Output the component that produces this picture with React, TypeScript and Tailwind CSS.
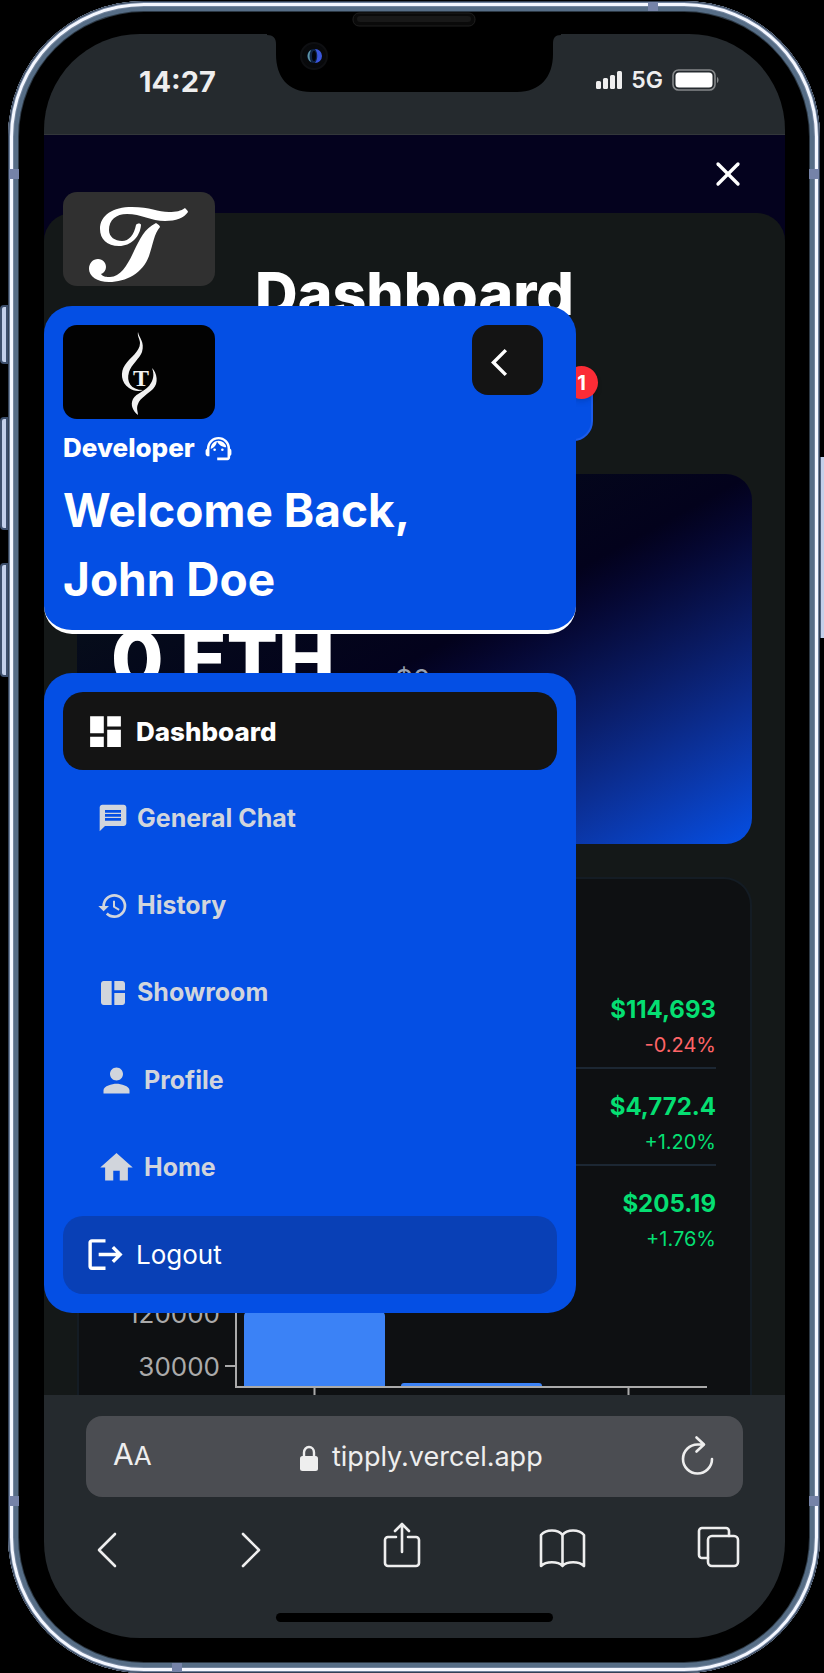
import type { ReactNode } from "react";
import {
  MdArrowBackIos,
  MdDashboard,
  MdHistory,
  MdHome,
  MdLogout,
  MdMessage,
  MdPerson,
  MdSpaceDashboard,
  MdSupportAgent,
} from "react-icons/md";
import { X } from "lucide-react";

const prices = [
  { coin: "Bitcoin", price: "$114,693", change: "-0.24%", up: false },
  { coin: "Ethereum", price: "$4,772.4", change: "+1.20%", up: true },
  { coin: "Solana", price: "$205.19", change: "+1.76%", up: true },
];

const links = [
  { label: "General Chat", icon: <MdMessage size={32} /> },
  { label: "History", icon: <MdHistory size={32} /> },
  { label: "Showroom", icon: <MdSpaceDashboard size={32} /> },
  { label: "Profile", icon: <MdPerson size={39} /> },
  { label: "Home", icon: <MdHome size={39} /> },
];

function Notch() {
  return (
    <svg
      className="absolute left-1/2 top-2.5 -translate-x-1/2"
      width="298"
      height="84"
      viewBox="0 0 298 84"
      aria-hidden="true"
    >
      <rect x="88" y="2" width="122" height="13" rx="6" fill="#0a0a0a" stroke="#1e1e1e" />
      <rect x="92" y="5" width="114" height="6" rx="3" fill="#181818" />
      <path
        d="M2 23H296V24C290 24 288 27 288 33V43C288 66 275 81 252 81H46C23 81 11 66 11 43V33C11 27 8 24 2 24Z"
        fill="#000"
      />
      <circle cx="49" cy="45" r="13" fill="#08090b" stroke="#0e0f12" strokeWidth="2" />
      <circle cx="49" cy="45" r="7" fill="#0f2344" />
      <path d="M46 39a7 7 0 0 0 0 12c-2-4-2-8 0-12Z" fill="#5f97a8" />
      <path d="M50 38a7 7 0 0 1 0 14c3-4 3-10 0-14Z" fill="#3a56dd" />
      <ellipse cx="49" cy="45" rx="2" ry="5" fill="#02030a" />
    </svg>
  );
}

function StatusBar() {
  return (
    <header className="flex h-[101px] items-start justify-between border-b border-[#33373a] bg-[#252a2e] pl-[95px] pr-[66px] pt-[30px] text-[#eeeeee]">
      <time className="text-[29px] font-bold leading-9">14:27</time>
      <div className="flex h-8 items-center gap-[9px]">
        <svg width="26" height="18" viewBox="0 0 26 18" fill="currentColor" aria-hidden="true">
          <rect x="0" y="10" width="5" height="8" rx="1.5" />
          <rect x="7" y="7" width="5" height="11" rx="1.5" />
          <rect x="14" y="4" width="5" height="14" rx="1.5" />
          <rect x="21" y="0" width="5" height="18" rx="1.5" />
        </svg>
        <span className="text-[23px] font-semibold leading-8">5G</span>
        <svg width="47" height="22" viewBox="0 0 47 22" aria-hidden="true">
          <rect x="1" y="1" width="42" height="20" rx="5.5" fill="none" stroke="#85888a" strokeWidth="1.6" />
          <rect x="3.5" y="3.5" width="37" height="15" rx="3.5" fill="#fff" />
          <path d="M45 8c2 1 2 5 0 6Z" fill="#85888a" />
        </svg>
      </div>
    </header>
  );
}

function Chart() {
  return (
    <svg className="mt-3.5 block w-full" viewBox="0 0 603 120" role="img" aria-label="Price chart">
      <g fill="#aaaaaa" fontSize="26" textAnchor="end">
        <text x="107" y="48">120000</text>
        <text x="107" y="101">30000</text>
      </g>
      <path d="M131 112V41a5 5 0 0 1 5-5H267a5 5 0 0 1 5 5V112Z" fill="#3b82f6" />
      <path d="M288 112v-1a3 3 0 0 1 3-3H426a3 3 0 0 1 3 3v1Z" fill="#3b82f6" />
      <path d="M123 0V112H594M112 91H123M201.500 112V120M515.500 112V120" fill="none" stroke="#aaaaaa" strokeWidth="2" />
    </svg>
  );
}

function Dashboard() {
  return (
    <div className="bg-[#04021e]">
      <div className="flex h-[78px] items-center justify-end pr-[37px]">
        <button type="button" aria-label="Close" className="text-white">
          <X size={40} strokeWidth={2} />
        </button>
      </div>
      <main className="rounded-t-[28px] bg-[#141818] px-[33px] pt-[45px]">
        <h1 className="text-center text-[59px] font-extrabold leading-[72px] text-white">Dashboard</h1>
        <div className="mt-[45px] flex justify-center">
          <button
            type="button"
            aria-label="Notifications"
            className="relative h-[66px] w-[357px] rounded-[20px] border-2 border-[#1c5cec] bg-[#044fe4]"
          >
            <span className="absolute -right-[7px] -top-[11px] flex size-[33px] items-center justify-center rounded-full bg-[#fb2c36] text-xl font-bold text-white shadow-md">
              1
            </span>
          </button>
        </div>
        <section className="mt-[33px] flex min-h-[370px] items-center rounded-[26px] bg-linear-to-br from-[#0c1518] via-[#03021c] to-[#044fe4] px-[34px]">
          <p className="flex items-end gap-[60px] pb-0.5">
            <span className="text-[76px] font-extrabold leading-[76px] text-white">0 ETH</span>
            <span className="text-[28px] leading-8 text-[#99a1af]">$0</span>
          </p>
        </section>
        <section className="mt-[33px] rounded-t-[28px] border-2 border-b-0 border-[#141c24] bg-[#0e1012] px-[34px] pt-[93px]">
          <ul>
            {prices.map((row) => (
              <li
                key={row.coin}
                className="flex flex-col items-end border-b-2 border-[#1c2733] pb-2 pt-[22px] last:border-b-0"
              >
                <span className="text-2xl font-bold leading-8 text-[#05df72]">{row.price}</span>
                <span
                  className={
                    row.up
                      ? "mt-[5px] text-xl leading-7 text-[#05df72]"
                      : "mt-[5px] text-xl leading-7 text-[#ff6467]"
                  }
                >
                  {row.change}
                </span>
              </li>
            ))}
          </ul>
          <Chart />
        </section>
      </main>
    </div>
  );
}

function ScriptLogo() {
  return (
    <div className="ml-[19px] flex h-[94px] w-[152px] items-center justify-center rounded-[14px] bg-[#303030]">
      <svg width="152" height="94" viewBox="0 0 152 94" fill="none" aria-label="Tipply" role="img">
        <path
          d="M122 16C123 17 125 19 125 20C121 26 113 29 102 29C88 29 78 22 64 22C53 22 46 28 46 38C46 45 52 49 59 49C66 49 71 43 73 33C74 31 78 31 78 33C77 45 68 54 56 54C44 54 37 47 37 37C37 23 50 15 69 15C87 15 95 20 106 20C113 20 118 19 122 16Z"
          fill="#fff"
        />
        <path
          d="M93 31C95 32 97 34 97 35C91 42 90 52 86 64C80 81 63 90 46 90C34 90 26 84 26 77C26 71 30 67 35 67C40 67 43 71 43 75C43 78 41 81 38 82C40 85 44 85 47 85C58 85 65 72 71 59C77 47 81 37 93 31Z"
          fill="#fff"
        />
      </svg>
    </div>
  );
}

function FlameLogo() {
  return (
    <div className="h-[94px] w-[152px] rounded-[14px] bg-[#020202]">
      <svg width="152" height="94" viewBox="0 0 152 94" role="img" aria-label="Tipply flame">
        <path
          d="M75 7C76 13 82 17 79 27C77 33 68 40 66 47C63 57 68 65 80 65C76 67 70 66 66 63C58 58 57 47 62 40C67 32 77 27 77 18C77 14 74 11 75 7Z"
          fill="#f1f1f1"
        />
        <path
          d="M89 43C94 48 96 58 90 64C85 69 77 73 75 79C73 83 75 87 75 90C70 86 67 80 70 74C73 68 84 66 88 58C91 53 91 48 89 43Z"
          fill="#f1f1f1"
        />
        <text x="78" y="61" textAnchor="middle" fontFamily="Liberation Serif, serif" fontWeight="700" fontSize="24" fill="#f1f1f1">
          T
        </text>
      </svg>
    </div>
  );
}

function Drawer() {
  return (
    <aside className="absolute left-0 top-[57px] w-[532px] max-w-full">
      <ScriptLogo />
      <section className="mt-5 rounded-[28px] border-b-4 border-white bg-[#044fe4] pb-4 pl-[19px] pr-[33px] pt-[19px] text-white">
        <div className="flex items-start justify-between">
          <FlameLogo />
          <button
            type="button"
            aria-label="Close menu"
            className="flex h-[70px] w-[71px] items-center justify-center rounded-2xl bg-[#141414] pt-1"
          >
            <MdArrowBackIos size={33} />
          </button>
        </div>
        <p className="mt-[13px] flex items-center gap-2 text-[26px] font-extrabold leading-8">
          Developer <MdSupportAgent size={31} />
        </p>
        <h2 className="mt-3 text-[46px] font-bold leading-[69px]">
          Welcome Back,
          <br />
          John Doe
        </h2>
      </section>
      <nav className="mt-[39px] flex min-h-[640px] flex-col justify-between rounded-[28px] bg-[#044fe4] p-[19px] text-[26px]">
        <a href="#dashboard" className="flex h-[78px] items-center gap-2.5 rounded-[20px] bg-[#141414] pl-[22px] font-extrabold text-white">
          <MdDashboard size={41} />
          Dashboard
        </a>
        {links.map((link) => (
          <a
            key={link.label}
            href="#page"
            className="flex h-[78px] items-center gap-2 pl-[34px] text-[25px] font-bold text-[#d1d5dc]"
          >
            {link.icon}
            {link.label}
          </a>
        ))}
        <button type="button" className="flex h-[78px] items-center gap-2.5 rounded-[20px] bg-[#0940b6] pl-[22px] text-white">
          <MdLogout size={41} />
          Logout
        </button>
      </nav>
    </aside>
  );
}

interface BarButtonProps {
  label: string;
  children: ReactNode;
  width: number;
  height: number;
  className?: string;
}

function BarButton({ label, children, width, height, className }: BarButtonProps) {
  return (
    <button type="button" aria-label={label} className={className}>
      <svg
        width={width}
        height={height}
        viewBox={`0 0 ${width} ${height}`}
        fill="none"
        stroke="currentColor"
        strokeWidth="2.6"
        strokeLinecap="round"
        strokeLinejoin="round"
      >
        {children}
      </svg>
    </button>
  );
}

function BrowserBar() {
  return (
    <footer className="flex flex-col bg-[#252a2e] px-[42px] pb-4 pt-[21px] text-[#eeeeee]">
      <div className="flex h-[81px] items-center justify-between rounded-2xl bg-[#4b4d52] pl-[27px] pr-[29px]">
        <button type="button" aria-label="Text size" className="pb-1 text-[30px] leading-9">
          A<span className="text-[26px]">A</span>
        </button>
        <div className="flex items-center gap-3.5 pl-2.5 pt-0.5 text-[27px]">
          <svg width="18" height="26" viewBox="0 0 18 26" aria-hidden="true">
            <path d="M4 12V7.500a5 5.500 0 0 1 10 0V12" fill="none" stroke="currentColor" strokeWidth="2.400" />
            <rect y="11" width="18" height="15" rx="2.500" fill="currentColor" />
          </svg>
          <span>tipply.vercel.app</span>
        </div>
        <BarButton label="Reload" width={33} height={40} className="pb-1">
          <path d="M31 24a14.500 14.500 0 1 1-14.500-14.500h6M15.500 2.500l7.500 7-7.500 7" />
        </BarButton>
      </div>
      <div className="flex items-end justify-between pl-2.5 pr-[3px] pt-[25px]">
        <BarButton label="Back" width={21} height={36} className="pr-3.5">
          <path d="M19 2 3 18 19 34" />
        </BarButton>
        <BarButton label="Forward" width={21} height={36} className="pr-3">
          <path d="M2 2 18 18 2 34" />
        </BarButton>
        <BarButton label="Share" width={38} height={46} className="pr-2">
          <path d="M13 15H5a3 3 0 0 0-3 3V41a3 3 0 0 0 3 3H33a3 3 0 0 0 3-3V18a3 3 0 0 0-3-3H25M19 30V2M12 9l7-7 7 7" />
        </BarButton>
        <BarButton label="Bookmarks" width={47} height={40} className="pr-0.5">
          <path d="M23.500 7C19 1 7 1 2 7V38C7 33 19 33 23.500 38C28 33 40 33 45 38V7C40 1 28 1 23.500 7V38" />
        </BarButton>
        <BarButton label="Tabs" width={43} height={42}>
          <path d="M11 32H5a3 3 0 0 1-3-3V5a3 3 0 0 1 3-3H29a3 3 0 0 1 3 3V10" />
          <rect x="11" y="10" width="30" height="30" rx="4" />
        </BarButton>
      </div>
      <div className="mx-auto mt-[45px] h-[9px] w-[277px] rounded-full bg-black" />
    </footer>
  );
}

const sideKey =
  "absolute -left-2 w-2 rounded-l-sm border-2 border-[#3d4f6c] bg-[#c3d0ea]";

export default function App() {
  return (
    <div
      className="min-h-screen overflow-hidden bg-black pl-2 pr-1 pt-px"
      style={{ fontFamily: 'Inter, "Liberation Sans", sans-serif' }}
    >
      <div className="relative rounded-[136px] bg-black pb-[35px] pl-9 pr-[35px] pt-[33px] shadow-[inset_0_0_0_1px_#334155,inset_0_0_0_2px_#6f819c,inset_0_0_0_5px_#f4f7ff,inset_0_0_0_6px_#74869f,inset_0_0_0_10px_#566d86,inset_0_0_0_11px_#2c3844]">
        <span className={`${sideKey} top-[304px] h-[59px]`} />
        <span className={`${sideKey} top-[416px] h-[113px]`} />
        <span className={`${sideKey} top-[562px] h-[114px]`} />
        <span className="absolute -right-1 top-[456px] h-[181px] w-1 border-l border-[#4d5f7c] bg-[#c3d0ea]" />
        <span className="absolute left-px top-[168px] h-2.5 w-2.5 bg-[#7583a8]" />
        <span className="absolute right-px top-[168px] h-2.5 w-2.5 bg-[#7583a8]" />
        <span className="absolute bottom-[167px] left-px h-2.5 w-2.5 bg-[#7583a8]" />
        <span className="absolute bottom-[167px] right-px h-2.5 w-2.5 bg-[#7583a8]" />
        <span className="absolute right-[162px] top-px h-[9px] w-2.5 bg-[#7583a8]" />
        <span className="absolute bottom-px left-[164px] h-[9px] w-2.5 bg-[#7583a8]" />
        <div className="overflow-hidden rounded-[96px]">
          <StatusBar />
          <div className="relative">
            <Dashboard />
            <Drawer />
          </div>
          <BrowserBar />
        </div>
        <Notch />
      </div>
    </div>
  );
}
